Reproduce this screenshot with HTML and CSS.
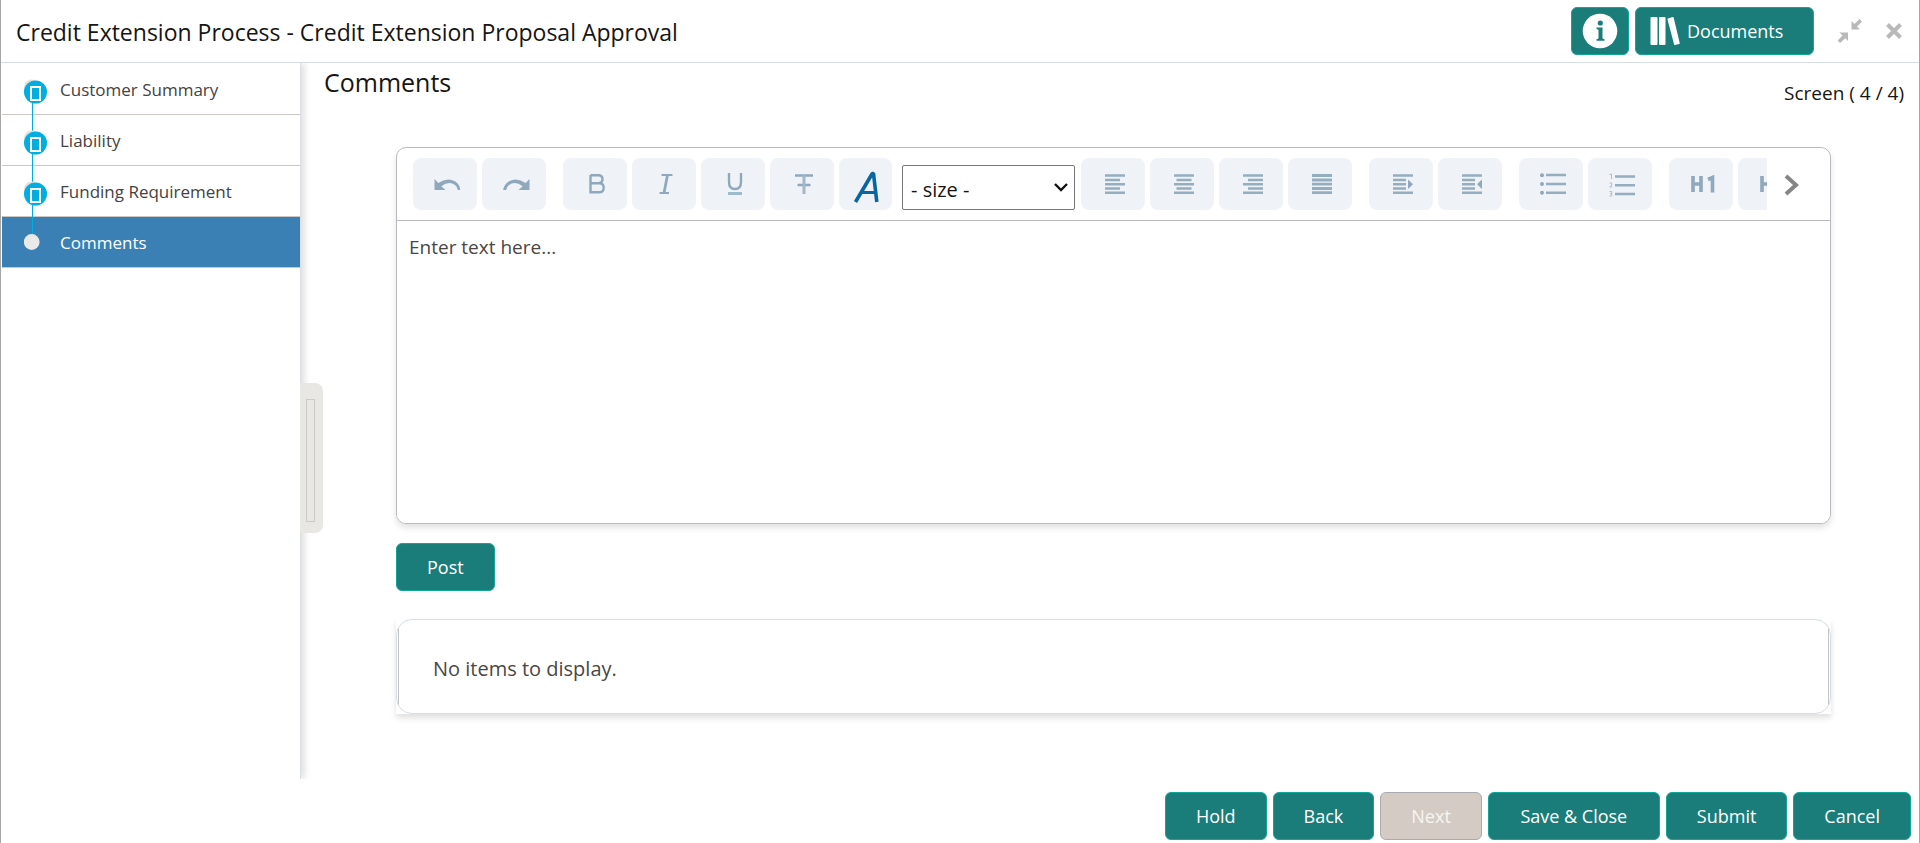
FILE: index.html
```html
<!DOCTYPE html>
<html lang="en">
<head>
<meta charset="utf-8">
<title>Credit Extension Process</title>
<link rel="stylesheet" href="styles.css">
</head>
<body>
<div class="app">
  <header class="header">
    <h1 class="header-title">Credit Extension Process - Credit Extension Proposal Approval</h1>
    <div class="header-actions">
      <button class="btn btn-info" type="button" aria-label="Information">
        <svg width="36" height="36" viewBox="0 0 36 36"><circle cx="18" cy="18" r="17.3" fill="#fff"/><circle cx="18.3" cy="10" r="2.6" fill="#1b7d79"/><path d="M14.5 14.5h6v11l2 .8v1.4h-8v-1.4l2-.8v-8.8l-2-.8z" fill="#1b7d79"/></svg>
      </button>
      <button class="btn btn-documents" type="button">
        <svg width="31" height="30" viewBox="0 0 31 30" fill="#fff"><rect x="0.5" y="1" width="7" height="28" rx="1"/><rect x="9" y="1" width="6.500" height="28" rx="1"/><path d="M18 2.400l4.700-1.300q.8-.2 1 .6l6 25.300q.2.800-.6 1l-4 1q-.8.200-1-.6l-6.600-25q-.2-.8.5-1z"/></svg>
        <span>Documents</span>
      </button>
      <button class="icon-btn" type="button" aria-label="Collapse">
        <svg width="26" height="26" viewBox="0 0 26 26"><path d="M14.500 3v8.500H23L20 8.800l5-5.300L22.500 1l-5 5zM2.500 14.500H11V23l-2.700-2.700L3 25l-2.300-2.500L5.500 17.500z" fill="#b9b9b9"/></svg>
      </button>
      <button class="icon-btn" type="button" aria-label="Close">
        <svg width="16" height="16" viewBox="0 0 16 16"><path d="M1.500 1.500l13 13M14.500 1.500l-13 13" stroke="#b9b9b9" stroke-width="4"/></svg>
      </button>
    </div>
  </header>

  <div class="body">
    <nav class="sidebar">
      <ol class="steps">
        <li class="step"><a class="step-link" href="#summary">
          <svg class="step-mark" width="24" height="51" viewBox="0 0 24 51"><path d="M8.500 28v23" stroke="#00aee0"/><circle cx="7.500" cy="23" r="7.500" fill="#e4e2e0"/><circle cx="11.500" cy="28" r="11.500" fill="#00aee0"/><rect x="7" y="23" width="9" height="13" fill="none" stroke="#fff" stroke-width="2"/></svg>
          Customer Summary</a></li>
        <li class="step"><a class="step-link" href="#liability">
          <svg class="step-mark" width="24" height="51" viewBox="0 0 24 51"><path d="M8.500 0v51" stroke="#00aee0"/><circle cx="7.500" cy="23" r="7.500" fill="#e4e2e0"/><circle cx="11.500" cy="28" r="11.500" fill="#00aee0"/><rect x="7" y="23" width="9" height="13" fill="none" stroke="#fff" stroke-width="2"/></svg>
          Liability</a></li>
        <li class="step"><a class="step-link" href="#funding">
          <svg class="step-mark" width="24" height="51" viewBox="0 0 24 51"><path d="M8.500 0v51" stroke="#00aee0"/><circle cx="7.500" cy="23" r="7.500" fill="#e4e2e0"/><circle cx="11.500" cy="28" r="11.500" fill="#00aee0"/><rect x="7" y="23" width="9" height="13" fill="none" stroke="#fff" stroke-width="2"/></svg>
          Funding Requirement</a></li>
        <li class="step"><a class="step-link active" href="#comments" aria-current="step">
          <svg class="step-mark" width="24" height="51" viewBox="0 0 24 51"><path d="M8.500 0v20" stroke="#00aee0"/><circle cx="7.700" cy="25" r="7.900" fill="#e9e9e9"/></svg>
          Comments</a></li>
      </ol>
      <button class="splitter" type="button" aria-label="Toggle navigation"><span class="splitter-grip"></span></button>
    </nav>

    <main class="main">
      <div class="main-head">
        <h2 class="main-title">Comments</h2>
        <p class="screen-count">Screen ( 4 / 4)</p>
      </div>
      <div class="content">
        <section class="editor">
          <div class="toolbar">
            <div class="tools">
              <div class="group">
                <button class="tool" type="button" aria-label="Undo"><svg width="28" height="20" viewBox="0 0 28 20"><path d="M1.500 5v11h11L8.300 12.200Q16 6.500 22 11q2.600 2 2.800 5h2.500Q27 10.500 22 7.200 14 3 5.300 9z" fill="#8fa8bc"/></svg></button>
                <button class="tool" type="button" aria-label="Redo"><svg width="28" height="20" viewBox="0 0 28 20"><path d="M27.500 5v11h-11l4.200-3.800Q13 6.500 7 11q-2.600 2-2.800 5H1Q2 10.500 7 7.200 15 3 23.700 9z" fill="#8fa8bc"/></svg></button>
              </div>
              <div class="group">
                <button class="tool" type="button" aria-label="Bold"><svg width="22" height="22" viewBox="0 0 22 22" fill="none" stroke="#8fa8bc" stroke-width="2.400"><path d="M4.500 2.200H13q3.500.3 3.500 4t-3.500 4H4.500M4.500 10.200H14q3.700.5 3.700 4.600T14 19.300H4.500zM4.500 2v17"/></svg></button>
                <button class="tool" type="button" aria-label="Italic"><svg width="22" height="22" viewBox="0 0 22 22" fill="none" stroke="#8fa8bc" stroke-width="2"><path d="M6.500 2h11M4.500 20H14" /><path d="M12.500 2l-3.500 18" stroke-width="2.800"/></svg></button>
                <button class="tool" type="button" aria-label="Underline"><svg width="22" height="24" viewBox="0 0 22 24" fill="none" stroke="#8fa8bc" stroke-width="2.400"><path d="M5 1v9q0 7 6 7t6-7V1"/><path d="M4 21.500h14" stroke="#9dbccb" stroke-width="3"/></svg></button>
                <button class="tool" type="button" aria-label="Strikethrough"><svg width="22" height="22" viewBox="0 0 22 22" fill="none" stroke="#8fa8bc" stroke-width="2.400"><path d="M2 2.500h18M4.500 12h13" /><path d="M11 2v19" stroke-width="3" stroke="#a2b7c8"/></svg></button>
                <button class="tool tool-font" type="button" aria-label="Font"><svg width="28" height="32" viewBox="0 0 28 32" fill="none" stroke="#0a66a3" stroke-width="3.600"><path d="M3.500 31L20.300 2.500h1.200L24.800 31" stroke-linejoin="bevel"/><path d="M9.500 21.500h15" stroke-width="3"/></svg></button>
              </div>
              <select class="size-select" aria-label="Font size"><option>- size -</option></select>
              <div class="group">
                <button class="tool" type="button" aria-label="Align left"><svg width="20" height="22" viewBox="0 0 20 22" fill="none" stroke="#94adbf" stroke-width="2.600"><path d="M0 2.500h20M0 7h15M0 11.200h20M0 15.500h15M0 19.700h20"/></svg></button>
                <button class="tool" type="button" aria-label="Align center"><svg width="20" height="22" viewBox="0 0 20 22" fill="none" stroke="#94adbf" stroke-width="2.600"><path d="M0 2.500h20M2.500 7h15M0 11.200h20M2.500 15.500h15M0 19.700h20"/></svg></button>
                <button class="tool" type="button" aria-label="Align right"><svg width="20" height="22" viewBox="0 0 20 22" fill="none" stroke="#94adbf" stroke-width="2.600"><path d="M0 2.500h20M5 7h15M0 11.200h20M5 15.500h15M0 19.700h20"/></svg></button>
                <button class="tool" type="button" aria-label="Justify"><svg width="20" height="22" viewBox="0 0 20 22" fill="none" stroke="#94adbf" stroke-width="2.800"><path d="M0 2.500h20M0 7h20M0 11.200h20M0 15.500h20M0 19.700h20"/></svg></button>
              </div>
              <div class="group">
                <button class="tool" type="button" aria-label="Indent"><svg width="20" height="22" viewBox="0 0 20 22" fill="none" stroke="#94adbf" stroke-width="2.600"><path d="M0 2.500h20M0 7h13M0 11.200h13M0 15.500h13M0 19.700h20"/><path d="M15 6.500l5 4.700-5 4.700z" fill="#8fa8bc" stroke="none"/></svg></button>
                <button class="tool" type="button" aria-label="Outdent"><svg width="20" height="22" viewBox="0 0 20 22" fill="none" stroke="#94adbf" stroke-width="2.600"><path d="M0 2.500h20M0 7h13M0 11.200h13M0 15.500h13M0 19.700h20"/><path d="M20 6.500l-5 4.700 5 4.700z" fill="#8fa8bc" stroke="none"/></svg></button>
              </div>
              <div class="group">
                <button class="tool" type="button" aria-label="Bulleted list"><svg width="26" height="22" viewBox="0 0 26 22" fill="none" stroke="#94adbf" stroke-width="2.600"><path d="M6 2h20M6 11h20M6 19.700h20"/><g fill="#8fa8bc" stroke="none"><circle cx="2" cy="2.200" r="2"/><circle cx="2" cy="11" r="2"/><circle cx="2" cy="19.700" r="2"/></g></svg></button>
                <button class="tool" type="button" aria-label="Numbered list"><svg width="26" height="26" viewBox="0 0 26 26" fill="none" stroke="#94adbf" stroke-width="2.600"><path d="M6 5.500h20M6 14.200h20M6 23h20"/><path d="M.5 3.500L2.500 3v5M.5 12h2.200v2L.8 16h2.400M.5 20.500h2.200v4.500H.5M1 22.700h1.700" stroke-width="1" stroke="#a9bdcc"/></svg></button>
              </div>
              <div class="group">
                <button class="tool" type="button" aria-label="Heading 1"><svg width="26" height="18" viewBox="0 0 26 18" fill="none" stroke="#8fa8bc" stroke-width="3.600"><path d="M3 1v16M11 1v16M3 9h8M18 4.500l4.500-2V17.500"/></svg></button>
                <button class="tool" type="button" aria-label="Heading 2"><svg width="26" height="18" viewBox="0 0 26 18" fill="none" stroke="#8fa8bc" stroke-width="3.600"><path d="M3 1v16M11 1v16M3 9h8M17 4q6-3 6 1.500 0 3-6 10.500h8"/></svg></button>
              </div>
            </div>
            <button class="icon-btn more" type="button" aria-label="More tools"><svg width="16" height="22" viewBox="0 0 16 22"><path d="M2 2l10 9-10 9" fill="none" stroke="#858585" stroke-width="4"/></svg></button>
          </div>
          <textarea class="editor-text" placeholder="Enter text here..." aria-label="Comment"></textarea>
        </section>
        <button class="btn btn-post" type="button">Post</button>
        <section class="empty">
          <div class="empty-card"><p class="empty-text">No items to display.</p></div>
        </section>
      </div>
    </main>
  </div>

  <footer class="footer">
    <button class="btn" type="button">Hold</button>
    <button class="btn" type="button">Back</button>
    <button class="btn" type="button" disabled>Next</button>
    <button class="btn btn-wide" type="button">Save &amp; Close</button>
    <button class="btn" type="button">Submit</button>
    <button class="btn" type="button">Cancel</button>
  </footer>
</div>
</body>
</html>
```

FILE: styles.css
```css
* { box-sizing: border-box; }

body {
  margin: 0;
  background: #fff;
  color: #161513;
  font-family: "Open Sans", "Noto Sans", sans-serif;
  font-size: 19px;
}

h1, h2, p, ol { margin: 0; padding: 0; font-weight: 400; }
button, select, textarea { font: inherit; }
svg { display: block; flex: none; }

.app {
  display: flex;
  flex-direction: column;
  min-height: 100vh;
  border: solid #a6a6a6;
  border-width: 0 1px;
}

/* Header */
.header {
  display: flex;
  align-items: center;
  justify-content: space-between;
  height: 63px;
  padding: 0 17px 0 15px;
  border-bottom: 1px solid #d5dde3;
}
.header-title { font-size: 23px; line-height: 32px; padding-top: 2px; }
.header-actions { display: flex; align-items: center; gap: 6px; }

.btn {
  display: flex;
  align-items: center;
  justify-content: center;
  height: 48px;
  padding: 0 30px;
  border: 1px solid #12a698;
  border-radius: 6px;
  background: #1b7d79;
  color: #fff;
  font-size: 18px;
}
.btn:disabled { background: #d4ccc4; border-color: #a9abae; color: #f7f5f3; }
.btn-info { width: 58px; padding: 0; }
.btn-documents { width: 179px; padding: 0 14px; gap: 6px; justify-content: flex-start; }

.icon-btn { padding: 0; border: 0; background: none; }
.header-actions .icon-btn { margin-left: 17px; }

/* Body */
.body { display: flex; flex: 1; }
.sidebar {
  position: relative;
  flex: none;
  width: 300px;
  padding: 1px 0 0 1px;
  border-right: 1px solid #dcdfe2;
  box-shadow: 4px 0 6px #e2e2e2;
  clip-path: inset(0 -24px 0 0);
}
.steps { list-style: none; }
.step { border-bottom: 1px solid #cbc7c3; }
.step-link {
  display: flex;
  align-items: center;
  gap: 12px;
  height: 50px;
  padding-left: 22px;
  color: #45423f;
  font-size: 17px;
  text-decoration: none;
}
.step-link.active { background: #3b80b5; color: #fff; }

.splitter {
  position: absolute;
  top: 320px;
  left: 299px;
  width: 23px;
  height: 150px;
  padding: 16px 8px 11px 6px;
  border: 0;
  border-radius: 0 8px 8px 0;
  background: #e8e7e3;
}
.splitter-grip { display: block; height: 100%; border: 1px solid #cbcac7; }

.main { flex: 1; min-width: 0; }
.main-head {
  display: flex;
  justify-content: space-between;
  padding: 0 15px 0 23px;
}
.main-title { font-size: 25px; line-height: 38px; }
.screen-count { padding-top: 18px; line-height: 24px; }
.content { padding: 42px 88px 0 95px; }

/* Editor */
.editor {
  border: 1px solid #b9bbc0;
  border-radius: 10px;
  box-shadow: 0 4px 6px #e2e2e2;
  overflow: hidden;
}
.toolbar {
  display: flex;
  align-items: center;
  padding: 10px 30px 10px 16px;
  border-bottom: 1px solid #b9bbc0;
}
.tools { display: flex; flex: 1; min-width: 0; overflow: hidden; }
.group { display: flex; flex: none; gap: 5px; }
.group + .group { margin-left: 17px; }
.tool {
  display: flex;
  flex: none;
  align-items: center;
  justify-content: center;
  width: 64px;
  height: 52px;
  padding: 0 0 0 4px;
  border: 0;
  border-radius: 8px;
  background: #eff3f8;
}
.tool-font { width: 53px; padding: 6px 0 0; }
.size-select {
  flex: none;
  align-self: flex-end;
  width: 173px;
  height: 45px;
  margin: 0 6px 0 10px;
  padding: 3px 8px 0;
  border: 1px solid #767676;
  border-radius: 2px;
  appearance: none;
  background: #fff url("data:image/svg+xml,%3Csvg xmlns='http://www.w3.org/2000/svg' width='14' height='9'%3E%3Cpath d='M1 1l6 6 6-6' fill='none' stroke='%23111' stroke-width='2.4'/%3E%3C/svg%3E") no-repeat right 6px center;
  color: #161513;
  font-size: 20px;
}
.more { width: 16px; margin-left: 17px; padding-top: 2px; }
.editor-text {
  display: block;
  width: 100%;
  height: 302px;
  padding: 12px;
  border: 0;
  background: #fff;
  line-height: 28px;
  resize: none;
}
.editor-text::placeholder { color: #4a4744; opacity: 1; }

.btn-post { margin-top: 19px; }

/* Square shadow behind a rounded card */
.empty {
  margin-top: 28px;
  box-shadow: 0 4px 6px #e0e0e0;
}
.empty-card {
  padding: 0 1px;
  border: 1px solid #d3dee6;
  border-radius: 16px;
  overflow: hidden;
}
.empty-text {
  padding: 35px 34px 30px;
  border: solid #c4c4c6;
  border-width: 0 1px;
  color: #4a4744;
  font-size: 20px;
  line-height: 28px;
}

/* Footer */
.footer {
  display: flex;
  justify-content: flex-end;
  gap: 6px;
  padding: 13px 8px 3px;
}
.btn-wide { min-width: 172px; }
```
